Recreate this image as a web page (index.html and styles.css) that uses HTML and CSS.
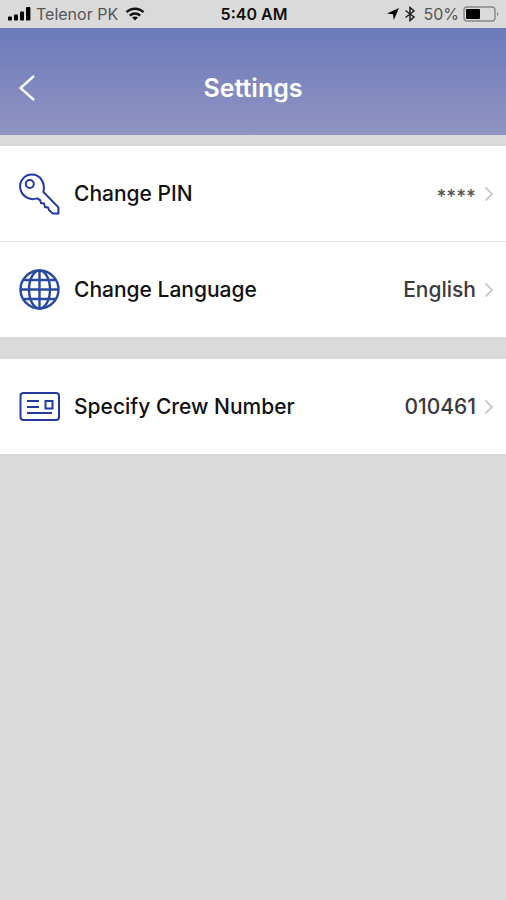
FILE: index.html
```html
<!DOCTYPE html>
<html lang="en">
<head>
  <meta charset="UTF-8" />
  <meta name="viewport" content="width=device-width, initial-scale=1.0" />
  <title>Settings</title>
  <link rel="stylesheet" href="styles.css">
</head>
<body>
  <div class="status-bar">
    <div class="status-left">
      <svg width="24" height="14" viewBox="0 0 24 14">
        <rect x="0" y="9.6" width="4" height="4" rx="1" />
        <rect x="6" y="7.6" width="4" height="6" rx="1" />
        <rect x="12" y="4.6" width="4" height="9" rx="1" />
        <rect x="18" y="0" width="4.4" height="13.6" rx="1" />
      </svg>
      <span class="carrier">Telenor PK</span>
      <svg width="20" height="14" viewBox="0 0 20 14" fill="none" stroke="#111" stroke-width="2.4">
        <path d="M1.5 5.2C6.2 0.6 13.8 0.6 18.5 5.2M4.8 8.6C7.8 5.8 12.2 5.8 15.2 8.6" />
        <path d="M10 13.5L7 10.6Q10 8.4 13 10.6Z" fill="#111" stroke="none" />
      </svg>
    </div>
    <span class="time">5:40 AM</span>
    <div class="status-right">
      <svg width="14" height="14" viewBox="0 0 14 14">
        <path d="M13 1L1 6.6L7 7.2L7.8 13Z" />
      </svg>
      <svg width="12" height="16" viewBox="0 0 12 16" fill="none" stroke="#222" stroke-width="1.5">
        <path d="M1.5 4.5L10 11L6 14.5V1.5L10 5L1.5 11.5" />
      </svg>
      <span class="battery-level">50%</span>
      <svg width="37" height="16" viewBox="0 0 37 16">
        <rect x="1" y="1" width="31" height="14" rx="3" fill="none" stroke="#888" stroke-width="1.4" />
        <rect x="3" y="3" width="14" height="10" rx="1" fill="#000" />
        <path d="M34 6Q37 8 34 10Z" fill="#888" />
      </svg>
    </div>
  </div>

  <header class="header">
    <button class="back" aria-label="Back">
      <svg width="18" height="28" viewBox="0 0 18 28" fill="none" stroke="#fff" stroke-width="2.4">
        <path d="M15 2L1.5 14L15 26" />
      </svg>
    </button>
    <h1>Settings</h1>
  </header>

  <main>
    <div class="group">
      <button class="row">
        <svg class="icon" width="42" height="42" viewBox="0 0 42 42">
          <circle cx="11.8" cy="11" r="4" />
          <path d="M25.4 19C27.4 11 23 1.8 14.4 1.6C6.5 1.4 1.2 8 2.2 15C3.4 23 11 28 19 25.4L22 27L23 30L26 30.5L27 34L30 34.5L31 37L34.6 40.4H40.4V34.4Z" />
        </svg>
        <span class="label">Change PIN</span>
        <span class="value pin">****</span>
        <svg class="chevron" width="10" height="16" viewBox="0 0 10 16"><path d="M1.5 1.5L8 8L1.5 14.5" /></svg>
      </button>
      <button class="row">
        <svg class="icon globe" width="42" height="42" viewBox="0 0 42 42">
          <circle cx="21.5" cy="20.5" r="19" />
          <ellipse cx="21.5" cy="20.5" rx="10.5" ry="19" />
          <path d="M21.5 1.5V39.5M2.5 20.5H40.5M6 11H37M6 30H37" />
        </svg>
        <span class="label">Change Language</span>
        <span class="value">English</span>
        <svg class="chevron" width="10" height="16" viewBox="0 0 10 16"><path d="M1.5 1.5L8 8L1.5 14.5" /></svg>
      </button>
    </div>

    <div class="group">
      <button class="row">
        <svg class="icon" width="42" height="42" viewBox="0 0 42 42">
          <rect x="2.5" y="7" width="38.5" height="27" rx="3" />
          <rect x="27.5" y="15" width="7" height="7.5" />
          <path d="M9 15H21M9 21H21M9 27H34" />
        </svg>
        <span class="label">Specify Crew Number</span>
        <span class="value">010461</span>
        <svg class="chevron" width="10" height="16" viewBox="0 0 10 16"><path d="M1.5 1.5L8 8L1.5 14.5" /></svg>
      </button>
    </div>
  </main>
</body>
</html>
```
FILE: styles.css
```css
* {
  box-sizing: border-box;
}

body {
  margin: 0;
  background-color: #dadada;
  font-family: Inter, "Liberation Sans", sans-serif;
  color: #111;
}

svg {
  display: block;
  flex-shrink: 0;
}

button {
  border: none;
  background: none;
  padding: 0;
  font-family: inherit;
  color: inherit;
  cursor: pointer;
}

.status-bar {
  display: grid;
  grid-template-columns: 1fr auto 1fr;
  align-items: center;
  height: 28px;
  padding: 0 6px 0 8px;
  font-size: 16px;
}

.status-left,
.status-right {
  display: flex;
  align-items: center;
  gap: 4px;
}

.status-right {
  justify-content: flex-end;
}

.carrier,
.battery-level {
  color: #555;
}

.carrier {
  margin-right: 3px;
}

.battery-level {
  margin-left: 3px;
}

.time {
  font-weight: 600;
}

.header {
  display: grid;
  grid-template-columns: 1fr auto 1fr;
  align-items: center;
  padding: 46px 19px 33px;
  background: linear-gradient(#6b7aba, #9194c2);
  color: #fff;
}

.back {
  justify-self: start;
}

.header h1 {
  margin: 0;
  font-size: 25px;
  line-height: 28px;
  font-weight: 600;
}

.group {
  margin-top: 11px;
  background-color: #fff;
}

.group + .group {
  margin-top: 22px;
}

.row {
  display: flex;
  align-items: center;
  width: 100%;
  height: 95px;
  padding: 0 12px 0 18px;
  font-size: 21px;
  font-weight: 500;
}

.row + .row {
  height: 96px;
  border-top: 1px solid #e4e4e4;
}

.icon {
  fill: none;
  stroke: #2439a0;
  stroke-width: 2;
}

.globe {
  stroke: #2849a0;
  stroke-width: 2.4;
}

.label {
  flex: 1;
  margin-left: 14px;
  text-align: left;
}

.value {
  margin-right: 8px;
  color: #3a3a3a;
}

.pin {
  padding-top: 6px;
  font-size: 19px;
  color: #555;
}

.chevron {
  fill: none;
  stroke: #ccc;
  stroke-width: 2;
}
```
